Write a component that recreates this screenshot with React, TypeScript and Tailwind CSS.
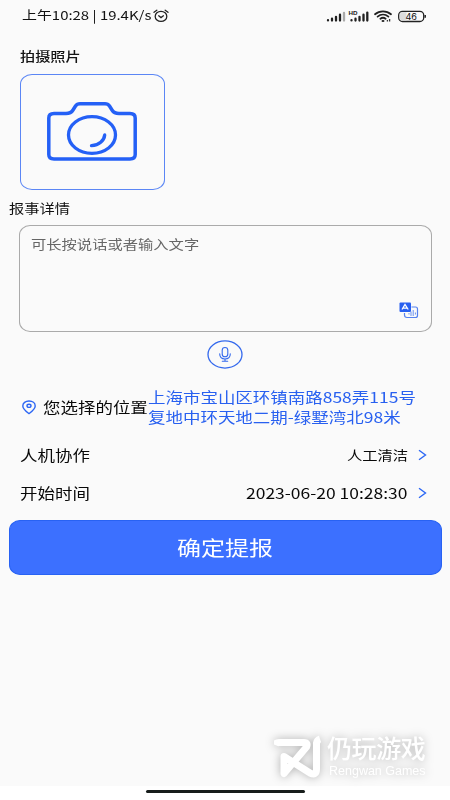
import type { ReactNode } from 'react';
import clsx from 'clsx';

// Text with the wide letterforms used throughout the screen.
function Wide({ children, className }: { children: ReactNode; className?: string }) {
  return (
    <span className={clsx('block origin-left scale-x-[1.205] whitespace-nowrap', className)}>{children}</span>
  );
}

function AlarmIcon() {
  return (
    <svg className="h-[14px] w-[16px]" viewBox="0 0 16 14" fill="none" stroke="#222" strokeWidth="1.3" strokeLinecap="round">
      <ellipse cx="8" cy="7.4" rx="5.8" ry="5" />
      <path d="M5.7 6.8 8 8.6l2.4-1.8M1 3.3 3.8 1.2M15 3.3l-2.8-2.1" />
    </svg>
  );
}

function StatusIcons() {
  return (
    <svg className="h-[16px] w-[100px]" viewBox="0 0 100 16" fill="none">
      <g stroke="#202020" strokeWidth="2.3" strokeLinecap="round">
        <path d="M2 12.2v.2M6 10.7v1.8M10 8.8v3.7M14 6.7v5.8" />
        <path d="M18 5v7.5" stroke="#aaa" />
        <path d="M25.5 12.2v.2M29.5 10.7v1.8M33.5 8.8v3.7M37.5 6.7v5.8M41.3 4.6v7.9" />
      </g>
      <text x="22.5" y="7.2" fontSize="5.4" fontWeight="700" fill="#202020" textLength="9" lengthAdjust="spacingAndGlyphs" fontFamily="Liberation Sans, sans-serif">HD</text>
      <g stroke="#202020" strokeWidth="1.8" strokeLinecap="round">
        <path d="M49 6.2C53.5 2.3 60.5 2.3 65 6.2" />
        <path d="M51.6 8.6c3.2-2.7 7.6-2.7 10.8 0" />
        <path d="M54.4 10.8c1.6-1.3 3.6-1.3 5.2 0" />
      </g>
      <ellipse cx="57" cy="13" rx="1.5" ry="1.1" fill="#202020" />
      <path d="M61.4 13.5v-1.6M63.6 13.5v-2.4" stroke="#333" strokeWidth="1.3" />
      <rect x="72.7" y="3.3" width="25" height="10.2" rx="3.8" stroke="#222" strokeWidth="1.3" />
      <path d="M76.500 4.300h4v8.200h-4a2.700 2.700 0 0 1-2.700-2.700V7a2.700 2.700 0 0 1 2.700-2.700Z" fill="#ddd" />
      <path d="M99.2 7v2.7" stroke="#222" strokeWidth="1.5" />
      <text x="79.4" y="11.5" fontSize="8.6" fontWeight="400" fill="#111" textLength="11.500" lengthAdjust="spacingAndGlyphs" fontFamily="Inter, sans-serif">46</text>
    </svg>
  );
}

function CameraIcon() {
  return (
    <svg className="h-[60px] w-[92px]" viewBox="0 0 92 60" fill="none" stroke="#2460f6" strokeLinecap="round" strokeLinejoin="round">
      <path strokeWidth="3.5" d="M8 12.500H20C24 12.500 25.500 11.500 27 9L29.500 5Q31 2.800 34 2.800H59Q62 2.800 63.500 5L66 9C67.500 11.500 69 12.500 73 12.500H84Q89.200 12.500 89.200 17V53.500Q89.200 58 84 58H8Q2.800 58 2.800 53.500V17Q2.800 12.500 8 12.500Z" />
      <ellipse cx="46" cy="34" rx="23.500" ry="18.300" strokeWidth="3.300" />
      <path strokeWidth="3.300" d="M58.700 34C58.200 39.500 53 44.300 45.500 44.600" />
    </svg>
  );
}

function TranslateIcon() {
  return (
    <svg className="h-[17px] w-[20px]" viewBox="0 0 20 17" fill="none">
      <path d="M12.500 5H16.500Q18.500 5 18.500 7V13.500Q18.500 15.500 16.500 15.500H8Q5.500 15.500 5.500 13V11" stroke="#5581ef" strokeWidth="1.200" />
      <rect x="0.500" y="0.500" width="11.500" height="9.500" rx="1" fill="#275ff0" />
      <path d="M3 7.500 6 2.500l3.200 5M4.200 6.200h3.800" stroke="white" strokeWidth="1.300" />
      <path d="M10 11v1.500M12 9.500v4.500M14.200 8v6M16.400 10.500v2" stroke="#6b91ef" strokeWidth="1" />
    </svg>
  );
}

function MicIcon() {
  return (
    <svg className="h-[29px] w-[36px]" viewBox="0 0 36 29" fill="none" stroke="#3469ed" strokeLinecap="round">
      <ellipse cx="18" cy="14.500" rx="17" ry="13.600" strokeWidth="1.300" />
      <rect x="15.200" y="7.500" width="5.600" height="9.300" rx="2.800" strokeWidth="1.100" />
      <path strokeWidth="1.100" d="M12.700 13.800c0 3.400 2.100 5.200 5.300 5.200s5.300-1.800 5.300-5.200M18 19v2.200M15.300 21.300h5.400" />
    </svg>
  );
}

function PinIcon() {
  return (
    <svg className="h-[15px] w-[14px]" viewBox="0 0 14 15" fill="none" stroke="#2c66f4" strokeWidth="1.400" strokeLinejoin="round">
      <path d="M7 13.600C4.300 11.500.8 9 .8 5.900.8 3 3.500 1 7 1s6.200 2 6.200 4.900c0 3.100-3.500 5.600-6.200 7.700Z" />
      <ellipse cx="7" cy="5.800" rx="2" ry="1.600" />
    </svg>
  );
}

function Chevron() {
  return (
    <svg className="h-[12px] w-[9px]" viewBox="0 0 9 12" fill="none" stroke="#2b67f5" strokeWidth="1.400">
      <path d="M1 1.200 7.500 6 1 10.800" />
    </svg>
  );
}

function Watermark() {
  return (
    <div className="absolute top-[735px] left-[274px] flex drop-shadow-[0_0_5px_rgba(0,0,0,0.3)]">
      <svg className="h-[44px] w-[48px]" viewBox="0 0 48 44" fill="none" stroke="white" strokeWidth="7" strokeLinecap="round" strokeLinejoin="round">
        <path strokeLinecap="butt" d="M1 10Q2 7.500 5 7.500H28" />
        <path d="M24 7.500H30Q34.500 7.500 32.500 12L10 38.500V21.500L36 38Q42.500 41 42.500 34V10" />
        <path strokeLinecap="butt" d="M42.500 16V8Q43 5 46 4" />
      </svg>
      <div className="flex flex-col text-white">
        <span className="mt-[-3px] ml-[5px] h-[31px] font-['Noto_Sans_CJK_SC',sans-serif] text-[25px] leading-[31px] font-medium tracking-[-0.4px] whitespace-nowrap">
          仍玩游戏
        </span>
        <span className="mt-[2px] ml-[7px] font-['Liberation_Sans',sans-serif] text-[12.500px] leading-[13px] whitespace-nowrap">
          Rengwan Games
        </span>
      </div>
    </div>
  );
}

export default function App() {
  return (
    <div className="relative flex h-[800px] w-[450px] flex-col overflow-hidden bg-white font-['Noto_Sans_CJK_SC',sans-serif] text-[#080808]">
      <div className="flex h-[786px] flex-col bg-[#fafafa]">
        <header className="flex h-[30px] items-center pt-px pr-[24px] pl-[22px]">
          <Wide className="w-[131px] text-[12.400px] text-[#111]">上午10:28 | 19.4K/s</Wide>
          <AlarmIcon />
          <span className="grow" />
          <StatusIcons />
        </header>

        <main className="flex flex-col">
          <h2 className="mt-[16px] h-[20px] pl-[20px] text-[12.600px] leading-[20px] font-medium text-[#151515]">
            <Wide className="w-[50px]">拍摄照片</Wide>
          </h2>
          <button className="mt-[8px] ml-[20px] flex h-[116px] w-[144.500px] items-center justify-center rounded-[12px/10px] border border-[#5b86f5] pb-[2px]">
            <CameraIcon />
          </button>
          <h2 className="mt-[8px] h-[20px] pl-[9px] text-[12.700px] leading-[20px] text-[#111]">
            <Wide className="w-[51px]">报事详情</Wide>
          </h2>

          <section className="mr-[18px] ml-[19px] mt-[7px] flex h-[107px] flex-col justify-between rounded-[11px/10px] border border-[#aaa] pr-[12px] pb-[12px] pl-[11px]">
            <Wide className="mt-[8px] w-[140px] text-[12.700px] leading-[20px] text-[#666]">可长按说话或者输入文字</Wide>
            <span className="self-end"><TranslateIcon /></span>
          </section>
          <button className="mt-[8px] self-center"><MicIcon /></button>

          <section className="mt-[17px] flex h-[42px] items-center pl-[22px]">
            <PinIcon />
            <span className="ml-[7px] w-[105px] text-[14.500px] leading-[20px]">
              <Wide className="w-[87px]">您选择的位置</Wide>
            </span>
            <Wide className="w-[225px] text-[14.500px] leading-[20.500px] text-[#2860f0]">
              上海市宝山区环镇南路858弄115号
              <br />
              复地中环天地二期-绿墅湾北98米
            </Wide>
          </section>

          <section className="mt-[8px] flex flex-col pr-[23px] pl-[20px]">
            <div className="flex h-[38px] items-center">
              <Wide className="w-[58px] text-[14.500px]">人机协作</Wide>
              <Wide className="ml-auto w-[61px] text-[12.700px]">人工清洁</Wide>
              <span className="ml-[10px]"><Chevron /></span>
            </div>
            <div className="flex h-[38px] items-center">
              <Wide className="w-[58px] text-[14.500px]">开始时间</Wide>
              <Wide className="ml-auto w-[162px] text-[14.500px]">2023-06-20 10:28:30</Wide>
              <span className="ml-[10px]"><Chevron /></span>
            </div>
          </section>

          <button className="mr-[8.500px] ml-[9px] mt-[8px] flex h-[55px] items-center justify-center rounded-[11px/10px] border border-[#2862f3] bg-[#3c70ff] text-[20px] text-white">
            <span className="block scale-x-120">确定提报</span>
          </button>
        </main>
      </div>
      <footer className="flex justify-center pt-[4px]">
        <span className="h-[3px] w-[159px] rounded-full bg-[#171d1b]" />
      </footer>
      <Watermark />
    </div>
  );
}
